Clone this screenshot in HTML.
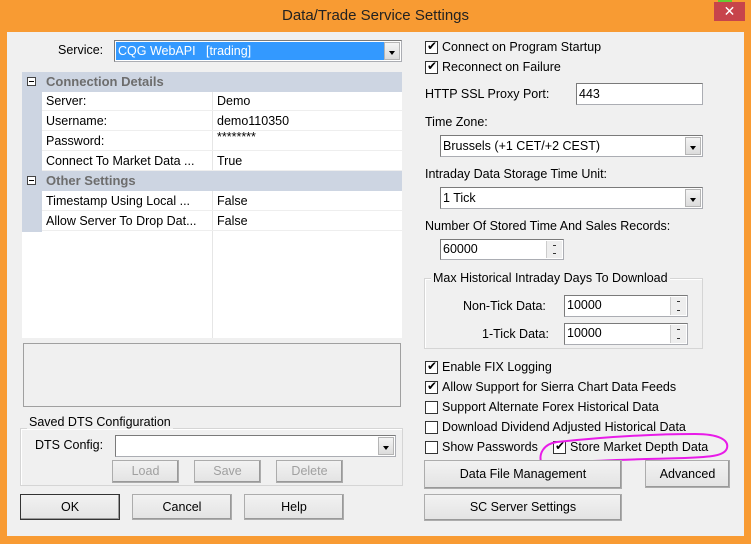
<!DOCTYPE html>
<html><head><meta charset="utf-8"><style>
*{box-sizing:border-box;margin:0;padding:0}
body{width:751px;height:544px;background:#f89b33;position:relative;overflow:hidden;font-family:"Liberation Sans",Arial,sans-serif;font-size:12.5px;color:#000}
.a{position:absolute;white-space:nowrap}
.content{position:absolute;left:7px;top:32px;width:737px;height:504px;background:#f0f0f0}
.title{left:0;top:0;width:751px;text-align:center;font-size:15px;line-height:32px;color:#222}
.close{left:714px;top:2px;width:31px;height:19px;background:#c7444b;color:#fff;text-align:center;font-size:14px;line-height:19px}
.tb{background:#fff;border:1px solid #abadb3;border-top-color:#7a7a7a;border-left-color:#7a7a7a}
.dd{position:absolute;right:1px;top:1px;bottom:1px;width:16px;background:linear-gradient(#f4f4f4,#dcdcdc);border:1px solid #b5b5b5}
.dd:after{content:"";position:absolute;left:4px;top:8px;border-left:3.5px solid transparent;border-right:3.5px solid transparent;border-top:4px solid #000}
.spin{position:absolute;right:1px;top:1px;bottom:1px;width:16px;background:#eee;border-left:1px solid #ccc}
.spin:before,.spin:after{content:"";position:absolute;left:6px;width:3px;height:1px;background:#333}
.spin:before{top:4px}.spin:after{bottom:4px}
.cb{width:13px;height:13px;border:1px solid #333;background:#fff}
.cb.c:after{content:"✔";position:absolute;left:1px;top:-3px;font-size:12px;line-height:15px}
.btn{background:linear-gradient(#f2f2f2,#e3e3e3);border:1px solid #acacac;text-align:center;box-shadow:inset -1px -1px 0 #999}
.grp{border:1px solid #d5d5d5;box-shadow:1px 1px 0 #fff inset}
.gl{background:#f0f0f0;padding:0 2px}
.row{position:absolute;left:42px;width:360px;height:20px;border-bottom:1px solid #eee;line-height:19px}
.cat{position:absolute;left:22px;width:380px;height:20px;background:#cdd5e2;font-weight:bold;color:#6d6d6d;line-height:19px;font-size:13px}
.cat .m{position:absolute;left:5px;top:5px;width:9px;height:9px;border:1px solid #444;background:#fff}
.cat .m:after{content:"";position:absolute;left:1px;top:3px;width:5px;height:1px;background:#000}
</style></head><body>
<div class="a title">Data/Trade Service Settings</div>
<div class="a" style="left:718px;top:0;width:14px;height:2px;background:#66cc33"></div>
<div class="a close">✕</div>
<div class="content"></div>

<div class="a" style="left:58px;top:43px">Service:</div>
<div class="a tb" style="left:114px;top:40px;width:288px;height:22px"><div class="a" style="left:1px;top:1px;width:269px;height:18px;background:#3399ff;color:#fff;padding-left:2px;line-height:18px">CQG WebAPI &nbsp;&nbsp;[trading]</div><div class="dd"></div></div>

<div class="a" style="left:22px;top:72px;width:380px;height:266px;background:#fff"></div>
<div class="a" style="left:22px;top:72px;width:20px;height:160px;background:#cdd5e2"></div>
<div class="a" style="left:212px;top:91px;width:1px;height:247px;background:#e6e6e6"></div>
<div class="cat" style="top:72px"><div class="m"></div><span style="position:absolute;left:24px">Connection Details</span></div>
<div class="row" style="top:91px"><span class="a" style="left:4px;top:1px">Server:</span><span class="a" style="left:175px;top:1px">Demo</span></div>
<div class="row" style="top:111px"><span class="a" style="left:4px;top:1px">Username:</span><span class="a" style="left:175px;top:1px">demo110350</span></div>
<div class="row" style="top:131px"><span class="a" style="left:4px;top:1px">Password:</span><span class="a" style="left:175px;top:-3px">********</span></div>
<div class="row" style="top:151px"><span class="a" style="left:4px;top:1px">Connect To Market Data ...</span><span class="a" style="left:175px;top:1px">True</span></div>
<div class="cat" style="top:171px"><div class="m"></div><span style="position:absolute;left:24px">Other Settings</span></div>
<div class="row" style="top:191px"><span class="a" style="left:4px;top:1px">Timestamp Using Local ...</span><span class="a" style="left:175px;top:1px">False</span></div>
<div class="row" style="top:211px"><span class="a" style="left:4px;top:1px">Allow Server To Drop Dat...</span><span class="a" style="left:175px;top:1px">False</span></div>

<div class="a" style="left:23px;top:343px;width:378px;height:64px;border:1px solid #a0a0a0"></div>

<div class="a grp" style="left:20px;top:428px;width:383px;height:58px"></div>
<div class="a gl" style="left:27px;top:415px">Saved DTS Configuration</div>
<div class="a" style="left:35px;top:438px">DTS Config:</div>
<div class="a tb" style="left:115px;top:435px;width:281px;height:22px"><div class="dd"></div></div>
<div class="a btn" style="left:112px;top:460px;width:67px;height:23px;color:#a0a0a0;line-height:21px">Load</div>
<div class="a btn" style="left:194px;top:460px;width:67px;height:23px;color:#a0a0a0;line-height:21px">Save</div>
<div class="a btn" style="left:276px;top:460px;width:67px;height:23px;color:#a0a0a0;line-height:21px">Delete</div>
<div class="a btn" style="left:20px;top:494px;width:100px;height:26px;line-height:24px;border:1px solid #333">OK</div>
<div class="a btn" style="left:132px;top:494px;width:100px;height:26px;line-height:24px">Cancel</div>
<div class="a btn" style="left:244px;top:494px;width:100px;height:26px;line-height:24px">Help</div>

<div class="a cb c" style="left:425px;top:41px"></div><div class="a" style="left:442px;top:40px">Connect on Program Startup</div>
<div class="a cb c" style="left:425px;top:61px"></div><div class="a" style="left:442px;top:60px">Reconnect on Failure</div>
<div class="a" style="left:425px;top:87px">HTTP SSL Proxy Port:</div>
<div class="a tb" style="left:576px;top:83px;width:127px;height:22px;padding:3px 2px">443</div>
<div class="a" style="left:425px;top:115px">Time Zone:</div>
<div class="a tb" style="left:440px;top:135px;width:263px;height:22px;padding:3px 2px">Brussels (+1 CET/+2 CEST)<div class="dd"></div></div>
<div class="a" style="left:425px;top:167px">Intraday Data Storage Time Unit:</div>
<div class="a tb" style="left:440px;top:187px;width:263px;height:22px;padding:3px 2px">1 Tick<div class="dd"></div></div>
<div class="a" style="left:425px;top:219px">Number Of Stored Time And Sales Records:</div>
<div class="a tb" style="left:440px;top:239px;width:124px;height:21px;padding:2px 2px">60000<div class="spin"></div></div>

<div class="a grp" style="left:424px;top:278px;width:279px;height:71px"></div>
<div class="a gl" style="left:431px;top:271px">Max Historical Intraday Days To Download</div>
<div class="a" style="left:463px;top:299px">Non-Tick Data:</div>
<div class="a tb" style="left:564px;top:295px;width:124px;height:22px;padding:2px 2px">10000<div class="spin"></div></div>
<div class="a" style="left:482px;top:327px">1-Tick Data:</div>
<div class="a tb" style="left:564px;top:323px;width:124px;height:22px;padding:2px 2px">10000<div class="spin"></div></div>

<div class="a cb c" style="left:425px;top:361px"></div><div class="a" style="left:442px;top:360px">Enable FIX Logging</div>
<div class="a cb c" style="left:425px;top:381px"></div><div class="a" style="left:442px;top:380px">Allow Support for Sierra Chart Data Feeds</div>
<div class="a cb" style="left:425px;top:401px"></div><div class="a" style="left:442px;top:400px">Support Alternate Forex Historical Data</div>
<div class="a cb" style="left:425px;top:421px"></div><div class="a" style="left:442px;top:420px">Download Dividend Adjusted Historical Data</div>
<div class="a cb" style="left:425px;top:441px"></div><div class="a" style="left:442px;top:440px">Show Passwords</div>
<div class="a cb c" style="left:553px;top:441px"></div><div class="a" style="left:570px;top:440px">Store Market Depth Data</div>
<svg class="a" style="left:535px;top:430px" width="200" height="40"><path d="M6 32 C4 24,8 14,22 12 C60 8,110 4,160 4 C184 4,194 10,192 18 C190 26,175 27,150 28 C110 29,70 30,40 32 C20 34,8 36,6 32" fill="none" stroke="#e81be8" stroke-width="2"/></svg>

<div class="a btn" style="left:424px;top:460px;width:198px;height:29px;line-height:27px">Data File Management</div>
<div class="a btn" style="left:645px;top:460px;width:85px;height:28px;line-height:26px">Advanced</div>
<div class="a btn" style="left:424px;top:494px;width:198px;height:27px;line-height:25px">SC Server Settings</div>
</body></html>
